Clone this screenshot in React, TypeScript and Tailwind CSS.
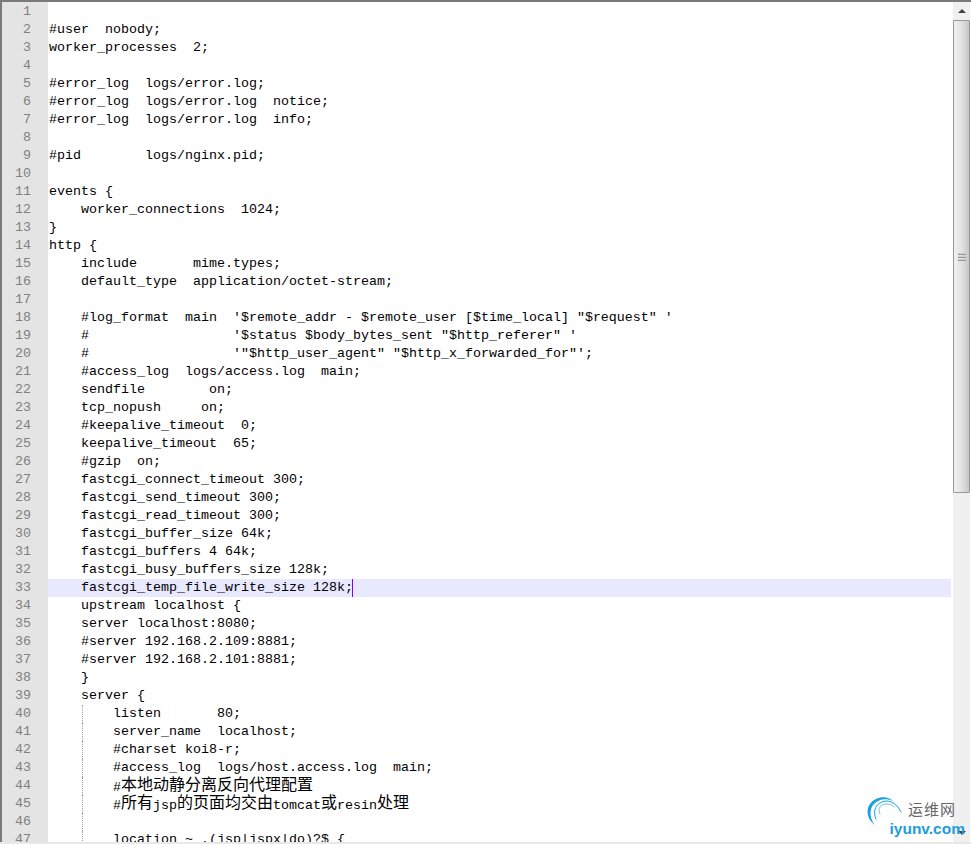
const lines = [
  "",
  "#user  nobody;",
  "worker_processes  2;",
  "",
  "#error_log  logs/error.log;",
  "#error_log  logs/error.log  notice;",
  "#error_log  logs/error.log  info;",
  "",
  "#pid        logs/nginx.pid;",
  "",
  "events {",
  "    worker_connections  1024;",
  "}",
  "http {",
  "    include       mime.types;",
  "    default_type  application/octet-stream;",
  "",
  "    #log_format  main  '$remote_addr - $remote_user [$time_local] \"$request\" '",
  "    #                  '$status $body_bytes_sent \"$http_referer\" '",
  "    #                  '\"$http_user_agent\" \"$http_x_forwarded_for\"';",
  "    #access_log  logs/access.log  main;",
  "    sendfile        on;",
  "    tcp_nopush     on;",
  "    #keepalive_timeout  0;",
  "    keepalive_timeout  65;",
  "    #gzip  on;",
  "    fastcgi_connect_timeout 300;",
  "    fastcgi_send_timeout 300;",
  "    fastcgi_read_timeout 300;",
  "    fastcgi_buffer_size 64k;",
  "    fastcgi_buffers 4 64k;",
  "    fastcgi_busy_buffers_size 128k;",
  "    fastcgi_temp_file_write_size 128k;",
  "    upstream localhost {",
  "    server localhost:8080;",
  "    #server 192.168.2.109:8881;",
  "    #server 192.168.2.101:8881;",
  "    }",
  "    server {",
  "        listen       80;",
  "        server_name  localhost;",
  "        #charset koi8-r;",
  "        #access_log  logs/host.access.log  main;",
  "        #本地动静分离反向代理配置",
  "        #所有jsp的页面均交由tomcat或resin处理",
  "",
  "        location ~ .(jsp|jspx|do)?$ {",
];

// mixed latin/CJK lines: CJK glyphs are two cells wide (16px) at 16px size
function CodeText({ text }: { text: string }) {
  const parts = text.split(/([\u4e00-\u9fff]+)/);
  return (
    <>
      {parts.map((part, i) =>
        /[\u4e00-\u9fff]/.test(part) ? (
          <span key={i} className="relative top-[-2px] font-['Noto_Sans_CJK_SC',sans-serif] text-[16px] leading-none">
            {part}
          </span>
        ) : (
          <span key={i} className={text.match(/[\u4e00-\u9fff]/) ? "relative top-[-1px]" : ""}>
            {part}
          </span>
        ),
      )}
    </>
  );
}

function Scrollbar() {
  return (
    <div className="flex w-[17px] shrink-0 flex-col bg-[#f0f0f0]">
      <div className="flex h-[18px] shrink-0 items-center justify-center">
        <div className="h-0 w-0 border-x-[4px] border-b-[4px] border-x-transparent border-b-[#404040]" />
      </div>
      <div className="flex h-[473px] shrink-0 items-center justify-center rounded-[1px] border border-[#979797] bg-gradient-to-r from-[#f1f1f1] via-[#e2e2e2] to-[#c6c6c6]">
        <div className="flex w-[8px] flex-col gap-[1px]">
          <div className="h-[2px] bg-gradient-to-b from-[#f0f0f0] to-[#777777]" />
          <div className="h-[2px] bg-gradient-to-b from-[#f0f0f0] to-[#777777]" />
          <div className="h-[2px] bg-gradient-to-b from-[#f0f0f0] to-[#777777]" />
        </div>
      </div>
      <div className="flex-1" />
      <div className="flex h-[18px] shrink-0 items-center justify-center">
        <div className="h-0 w-0 border-x-[4px] border-t-[4px] border-x-transparent border-t-[#404040]" />
      </div>
    </div>
  );
}

function Watermark() {
  return (
    <div className="absolute right-[4px] bottom-[6px] flex h-[44px] w-[103px] items-end pr-[2px]">
      <svg viewBox="0 0 40 44" className="absolute top-0 left-[-2px] h-[44px] w-[40px]" fill="none" strokeLinecap="round">
        <path d="M13 31 C3 24 3 10 14 5 C20 2 27 3 31 7 C24 4 16 5 11 11 C7 17 8 25 13 31 Z" fill="#18a0e0" />
        <path d="M14 25 C10 17 14 8 24 7 C31 7 36 12 39 18" stroke="#18a0e0" strokeWidth="1" />
        <path d="M18 20 C15 14 19 10 25 10 C28 10 30 11 32 13" stroke="#6ec3ec" strokeWidth="1" />
      </svg>
      <div className="relative flex w-full flex-col items-end">
        <span className="mr-[9px] font-['Noto_Sans_CJK_SC',sans-serif] text-[15px] leading-[20px] tracking-[1px] text-[#666666]">
          运维网
        </span>
        <span className="font-['Liberation_Sans',sans-serif] text-[15.5px] leading-[19px] font-bold text-[#1b9ddc]">
          iyunv.com
        </span>
      </div>
    </div>
  );
}

export default function App() {
  return (
    <div className="relative flex h-[844px] w-[971px] flex-col overflow-hidden bg-white">
      <div className="h-[2px] shrink-0 bg-[#7a7a7a]" />
      <div className="flex min-h-0 flex-1 border-b-2 border-b-[#e8e8e8]">
        <div className="w-[2px] shrink-0 bg-[#7a7a7a]" />
        {/* line numbers */}
        <div className="w-[46px] shrink-0 overflow-hidden bg-[#e4e4e4] pt-[1px] pr-[17px] text-right font-['Liberation_Mono',monospace] text-[13.33px] leading-[18px] text-[#808080]">
          {lines.map((_, i) => (
            <div key={i} className="h-[18px]">
              {i + 1}
            </div>
          ))}
        </div>
        {/* editor */}
        <div className="min-w-0 flex-1 overflow-hidden pt-[1px] font-['Liberation_Mono',monospace] text-[13.33px] leading-[18px] text-black">
          {lines.map((line, i) => (
            <div
              key={i}
              className={
                i === 32
                  ? "relative mr-[2px] h-[18px] bg-[#e8e8ff] pl-[1px] whitespace-pre"
                  : "relative mr-[2px] h-[18px] pl-[1px] whitespace-pre"
              }
            >
              {i >= 39 && (
                <span className="absolute top-0 left-[34px] h-[18px] border-l border-dotted border-l-[#a0a0a0]" />
              )}
              <CodeText text={line} />
              {i === 32 && <span className="absolute top-0 left-[304px] h-[18px] w-[1px] bg-[#8000ff]" />}
            </div>
          ))}
        </div>
        <Scrollbar />
        <div className="w-[1px] shrink-0 bg-white" />
      </div>
      <Watermark />
    </div>
  );
}
